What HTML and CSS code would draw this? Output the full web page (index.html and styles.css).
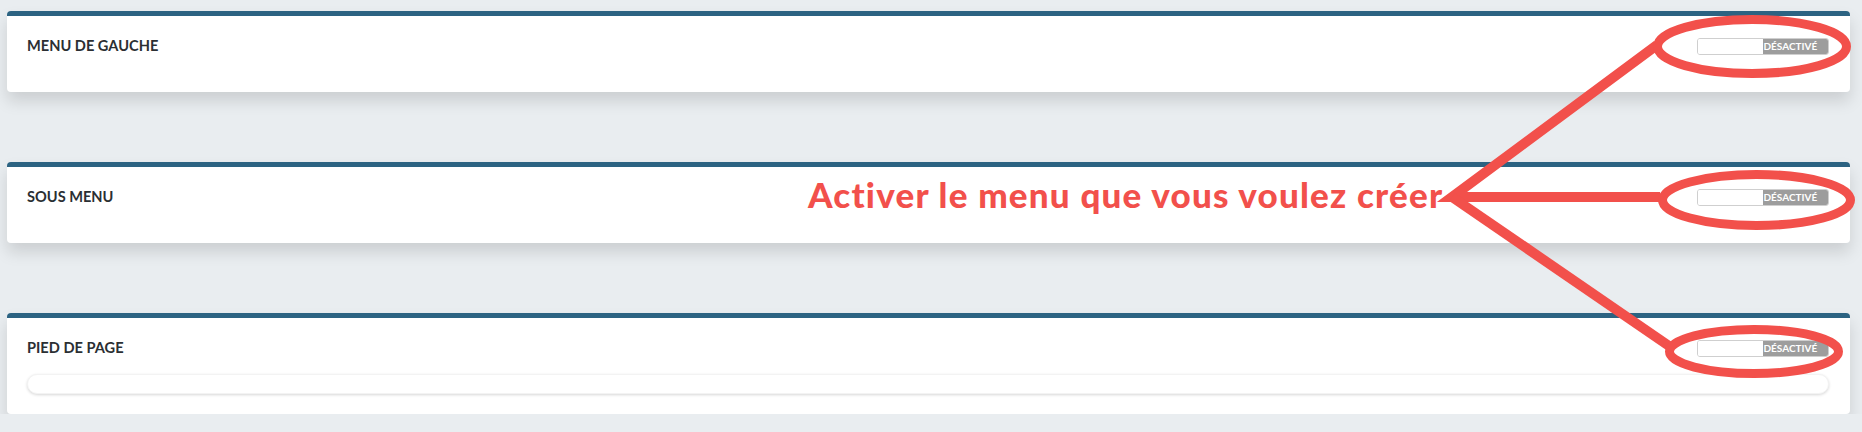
FILE: index.html
```html
<!DOCTYPE html>
<html lang="fr">
<head>
<meta charset="UTF-8">
<meta name="viewport" content="width=device-width, initial-scale=1.0">
<title>Menus</title>
<link rel="stylesheet" href="styles.css">
</head>
<body>
  <div class="page">
    <section class="card">
      <div class="card-head">
        <h2 class="card-title">MENU DE GAUCHE</h2>
        <div class="switch"><span class="switch-on"></span><span class="switch-off">DÉSACTIVÉ</span></div>
      </div>
    </section>

    <section class="card">
      <div class="card-head">
        <h2 class="card-title">SOUS MENU</h2>
        <div class="switch"><span class="switch-on"></span><span class="switch-off">DÉSACTIVÉ</span></div>
      </div>
    </section>

    <section class="card">
      <div class="card-head">
        <h2 class="card-title">PIED DE PAGE</h2>
        <div class="switch"><span class="switch-on"></span><span class="switch-off">DÉSACTIVÉ</span></div>
      </div>
      <div class="pill-input"></div>
    </section>
  </div>

  <!-- annotation drawn on top of the screenshot -->
  <div class="annotation">
    <svg class="marks" width="1862" height="432" viewBox="0 0 1862 432">
      <g fill="none" stroke="#f2504b" stroke-linecap="butt" stroke-linejoin="miter">
        <polyline points="1657,45 1452,197 1660,197" stroke-width="10"/>
        <line x1="1452" y1="197" x2="1672" y2="348" stroke-width="10"/>
        <ellipse cx="1752" cy="46.5" rx="94.5" ry="27" stroke-width="9"/>
        <ellipse cx="1756.5" cy="200" rx="94" ry="25.5" stroke-width="9"/>
        <ellipse cx="1754" cy="351.5" rx="84.5" ry="22" stroke-width="9"/>
      </g>
    </svg>
    <p class="note">Activer le menu que vous voulez créer</p>
  </div>
</body>
</html>
```

FILE: styles.css
```css
body {
  margin: 0;
  background-color: #e9edf0;
  font-family: Lato, "Liberation Sans", sans-serif;
}

.page {
  display: flex;
  flex-direction: column;
  gap: 70px;
  padding: 11px 12px 0 7px;
}

.card {
  background-color: #fff;
  border-top: 5px solid #2c6382;
  border-radius: 4px;
  padding: 20px 21px 20px 20px;
  box-shadow: 0 9px 16px rgba(0, 0, 0, 0.13);
}

.card-head {
  display: flex;
  justify-content: space-between;
  align-items: center;
  height: 20px;
  margin-bottom: 16px;
}

.card-title {
  margin: 0;
  font-size: 14.6px;
  font-weight: 700;
  line-height: 20px;
  color: #2b2f33;
}

.switch {
  display: flex;
  width: 132px;
  height: 17px;
  box-sizing: border-box;
  border: 1px solid #cfcfcf;
  border-radius: 3px;
  overflow: hidden;
}

.switch-on {
  flex: 1;
  background-color: #fff;
}

.switch-off {
  flex: 1;
  background-color: #9d9d9d;
  color: #fff;
  font-size: 10px;
  font-weight: 700;
  line-height: 15px;
  padding-left: 1px;
}

.pill-input {
  height: 20px;
  border-radius: 10px;
  background-color: #fff;
  border: 1px solid #f3f3f3;
  box-sizing: border-box;
  box-shadow: 0 1px 3px rgba(0, 0, 0, 0.16);
}

.annotation {
  position: absolute;
  top: 0;
  left: 0;
  width: 1862px;
  height: 432px;
  pointer-events: none;
}

.marks {
  position: absolute;
  top: 0;
  left: 0;
}

.note {
  position: absolute;
  top: 173px;
  left: 808px;
  margin: 0;
  font-family: Lato, "Liberation Sans", sans-serif;
  font-size: 35px;
  font-weight: 900;
  letter-spacing: 1.2px;
  line-height: 42px;
  color: #f2504b;
  white-space: nowrap;
}
```
